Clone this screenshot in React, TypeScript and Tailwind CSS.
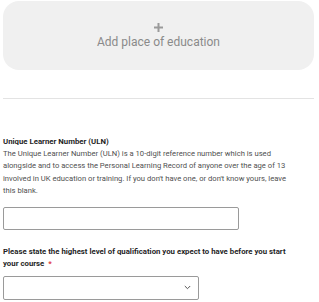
import React from "react";

export default function App() {
  return (
    <div
      className="w-[319px] h-[302px] overflow-hidden bg-white px-[3px] pt-[1px]"
      style={{ fontFamily: "Roboto, 'Liberation Sans', sans-serif" }}
    >
      <div className="h-[69px] w-[311px] rounded-[16px] bg-[#f0f0f0] flex flex-col items-center justify-center">
        <svg width="9" height="9" viewBox="0 0 9 9">
          <rect x="3.5" y="0" width="2" height="9" fill="#9a9a9a" />
          <rect x="0" y="3.5" width="9" height="2" fill="#9a9a9a" />
        </svg>
        <div className="mt-[3px] text-[12px] leading-[14px] text-[#8a8a8a]">Add place of education</div>
      </div>
      <div className="mt-[28px] h-[1px] w-[311px] bg-[#e3e3e3]" />
      <div className="mt-[37px] text-[7.8px] leading-[12.2px] font-bold text-[#1f1f1f]">
        Unique Learner Number (ULN)
      </div>
      <div className="w-[293px] text-[7.65px] leading-[12.2px] text-[#505050]">
        The Unique Learner Number (ULN) is a 10-digit reference number which is used alongside and to access the
        Personal Learning Record of anyone over the age of 13 involved in UK education or training. If you don't have
        one, or don't know yours, leave this blank.
      </div>
      <div className="mt-[10px] h-[23px] w-[236px] rounded-[2px] border border-[#9a9a9a] bg-white" />
      <div className="mt-[16px] text-[7.8px] leading-[12.4px] font-bold text-[#1f1f1f] w-[296px]">
        Please state the highest level of qualification you expect to have before you start your course{" "}
        <span className="ml-[2px] text-[#e0393e]">*</span>
      </div>
      <div className="mt-[5px] h-[24px] w-[196px] rounded-[2px] border border-[#9a9a9a] bg-white flex items-center justify-end pr-[7px]">
        <svg width="7" height="5" viewBox="0 0 7 5">
          <path d="M0.8 1 L3.5 3.7 L6.2 1" stroke="#555" strokeWidth="1" fill="none" />
        </svg>
      </div>
    </div>
  );
}
